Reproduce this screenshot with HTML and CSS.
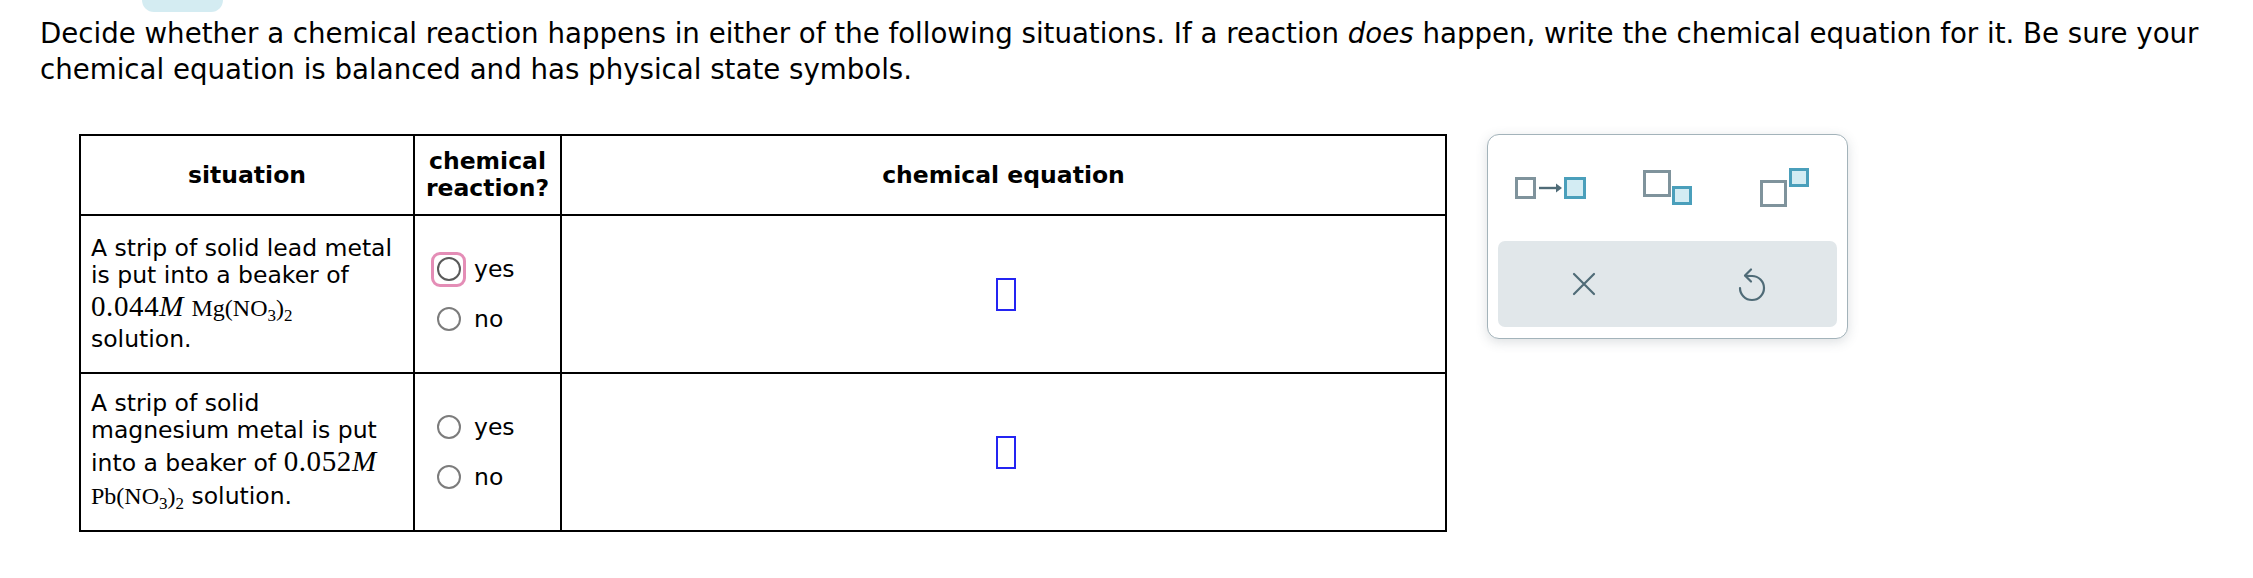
FILE: index.html
```html
<!DOCTYPE html>
<html lang="en">
<head>
<meta charset="utf-8">
<title>Chemical reaction</title>
<link rel="stylesheet" href="styles.css">
</head>
<body>
<div class="tab"></div>
<p class="prompt">Decide whether a chemical reaction happens in either of the following situations. If a reaction <em>does</em> happen, write the chemical equation for it. Be sure your chemical equation is balanced and has physical state symbols.</p>
<div class="work">
  <table class="grid">
    <colgroup><col class="c1"><col class="c2"><col class="c3"></colgroup>
    <thead>
      <tr class="head">
        <th>situation</th>
        <th>chemical<br>reaction?</th>
        <th>chemical equation</th>
      </tr>
    </thead>
    <tbody>
      <tr class="row">
        <td class="sit">A strip of solid lead metal<br>is put into a beaker of<br><span class="m">0.044<i>M</i></span> <span class="chem">Mg(NO<sub>3</sub>)<sub>2</sub></span><br>solution.</td>
        <td class="opts">
          <div class="opt"><span class="ring focus"><span class="dot"></span></span><span class="lbl">yes</span></div>
          <div class="opt"><span class="ring"><span class="dot"></span></span><span class="lbl">no</span></div>
        </td>
        <td class="eq"><span class="slot"></span></td>
      </tr>
      <tr class="row">
        <td class="sit">A strip of solid<br>magnesium metal is put<br>into a beaker of <span class="m">0.052<i>M</i></span><br><span class="chem">Pb(NO<sub>3</sub>)<sub>2</sub></span> solution.</td>
        <td class="opts">
          <div class="opt"><span class="ring"><span class="dot"></span></span><span class="lbl">yes</span></div>
          <div class="opt"><span class="ring"><span class="dot"></span></span><span class="lbl">no</span></div>
        </td>
        <td class="eq"><span class="slot"></span></td>
      </tr>
    </tbody>
  </table>

  <div class="tools">
    <div class="icons">
      <svg width="72" height="22" viewBox="0 0 72 22">
        <rect x="1.5" y="1.5" width="18" height="19" fill="#fff" stroke="#7f939c" stroke-width="3"/>
        <line x1="24" y1="11" x2="43" y2="11" stroke="#4f6b77" stroke-width="2.4"/>
        <polygon points="41,6.5 47,11 41,15.5" fill="#4f6b77"/>
        <rect x="50.5" y="1.5" width="19" height="19" fill="#d3ecf3" stroke="#4a9fbb" stroke-width="3"/>
      </svg>
      <svg width="50" height="36" viewBox="0 0 50 36">
        <rect x="1.5" y="1.5" width="25" height="24" fill="#fff" stroke="#7f939c" stroke-width="3"/>
        <rect x="30.5" y="17.5" width="17" height="16" fill="#d3ecf3" stroke="#4a9fbb" stroke-width="3"/>
      </svg>
      <svg width="50" height="40" viewBox="0 0 50 40">
        <rect x="1.5" y="13.5" width="24" height="24" fill="#fff" stroke="#7f939c" stroke-width="3"/>
        <rect x="30.5" y="1.5" width="17" height="16" fill="#d3ecf3" stroke="#4a9fbb" stroke-width="3"/>
      </svg>
    </div>
    <div class="actions">
      <svg width="26" height="26" viewBox="0 0 26 26">
        <path d="M3 3 L23 23 M23 3 L3 23" stroke="#4f6b77" stroke-width="2.2" stroke-linecap="round" fill="none"/>
      </svg>
      <svg width="28" height="36" viewBox="0 0 28 36">
        <path d="M14 10 A12 12 0 1 1 2 22" stroke="#4f6b77" stroke-width="2.2" stroke-linecap="round" fill="none"/>
        <path d="M13 3.5 L7 9.5 L13 15.5" stroke="#4f6b77" stroke-width="2.2" stroke-linecap="round" stroke-linejoin="round" fill="none"/>
        <line x1="7.5" y1="9.8" x2="14" y2="10" stroke="#4f6b77" stroke-width="2.2" stroke-linecap="round"/>
      </svg>
    </div>
  </div>
</div>
</body>
</html>
```

FILE: styles.css
```css
html, body {
  margin: 0;
  padding: 0;
  background: #fff;
}

body {
  font-family: "DejaVu Sans", Verdana, sans-serif;
  color: #000;
}

.tab {
  margin-left: 142px;
  width: 81px;
  height: 12px;
  background: #d4ecf2;
  border-radius: 0 0 12px 12px;
}

.prompt {
  margin: 4px 40px 0 40px;
  font-size: 27.65px;
  line-height: 36px;
}

.work {
  display: flex;
  align-items: flex-start;
  gap: 40px;
  margin-top: 46px;
  padding-left: 79px;
}

.grid {
  border-collapse: collapse;
  table-layout: fixed;
  width: 1368px;
  flex-shrink: 0;
  font-size: 23.5px;
  line-height: 27px;
}

.c1 { width: 334px; }
.c2 { width: 147px; }

.grid th,
.grid td {
  border: 2px solid #000;
  vertical-align: middle;
  padding: 0;
}

.head th {
  height: 78px;
  font-weight: bold;
  text-align: center;
}

.row td {
  height: 156px;
}

.sit {
  padding: 0 8px 0 10px !important;
  line-height: 27px;
}

.m {
  font-family: "Liberation Serif", "Times New Roman", serif;
  font-size: 29px;
  letter-spacing: 0.6px;
  line-height: 35px;
}

.chem {
  font-family: "Liberation Serif", "Times New Roman", serif;
  font-size: 24px;
  line-height: 35px;
}

.chem sub {
  font-size: 17px;
  line-height: 0;
  vertical-align: -5px;
}

.opts {
  padding: 0 0 0 16px !important;
}

.opt {
  display: flex;
  align-items: center;
  height: 35px;
}

.opt + .opt {
  margin-top: 15px;
}

.ring {
  box-sizing: border-box;
  width: 35px;
  height: 35px;
  border: 3px solid transparent;
  border-radius: 9px;
  display: flex;
  align-items: center;
  justify-content: center;
}

.ring.focus {
  border-color: #e48db6;
}

.dot {
  box-sizing: border-box;
  width: 24px;
  height: 24px;
  border: 2px solid #7c7c7c;
  border-radius: 50%;
}

.ring.focus .dot {
  border-color: #5a5a5a;
}

.lbl {
  margin-left: 8px;
}

.eq {
  text-align: center;
}

.slot {
  display: inline-block;
  box-sizing: border-box;
  width: 20px;
  height: 33px;
  border: 2px solid #2424f2;
  vertical-align: middle;
  margin-left: 4px;
}

.tools {
  box-sizing: border-box;
  width: 361px;
  height: 205px;
  flex-shrink: 0;
  border: 1.5px solid #a3b3ba;
  border-radius: 12px;
  background: #fff;
  box-shadow: 0 3px 12px rgba(60, 80, 90, 0.18);
  display: flex;
  flex-direction: column;
}

.icons {
  height: 106px;
  display: grid;
  grid-template-columns: repeat(3, 117px);
  justify-content: center;
  justify-items: center;
  align-items: center;
}

.icons svg,
.actions svg {
  display: block;
}

.actions {
  margin: 0 10px 10px 10px;
  height: 86px;
  background: #e1e7ea;
  border-radius: 7px;
  display: grid;
  grid-template-columns: repeat(2, 168px);
  justify-content: center;
  justify-items: center;
  align-items: center;
}
```
